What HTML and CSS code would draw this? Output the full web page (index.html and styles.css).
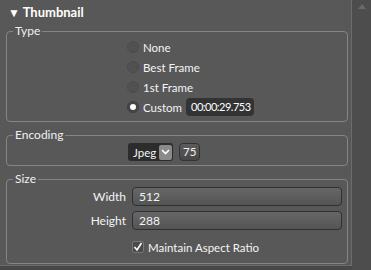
FILE: index.html
```html
<!DOCTYPE html>
<html lang="en">
<head>
  <meta charset="UTF-8" />
  <title>Thumbnail</title>
  <link rel="stylesheet" href="styles.css">
</head>
<body>
  <div class="frame">
    <div class="panel">
      <div class="header"><span class="caret">▼</span> Thumbnail</div>

      <fieldset class="group">
        <legend>Type</legend>
        <div class="radios">
          <label class="radio"><span class="dot"></span>None</label>
          <label class="radio"><span class="dot"></span>Best Frame</label>
          <label class="radio"><span class="dot"></span>1st Frame</label>
          <label class="radio"><span class="dot on"></span>Custom <span class="timecode">00:00:29.753</span></label>
        </div>
      </fieldset>

      <fieldset class="group">
        <legend>Encoding</legend>
        <div class="encoding">
          <div class="select">
            <span class="select-text">Jpeg</span>
            <span class="select-btn">
              <svg width="9" height="6" viewBox="0 0 9 6"><path d="M1 1 L4.5 4.5 L8 1" fill="none" stroke="#fff" stroke-width="1.6"/></svg>
            </span>
          </div>
          <div class="quality">75</div>
        </div>
      </fieldset>

      <fieldset class="group">
        <legend>Size</legend>
        <div class="size-grid">
          <span class="field-label">Width</span>
          <div class="input">512</div>
          <span class="field-label">Height</span>
          <div class="input">288</div>
          <span></span>
          <label class="check">
            <span class="box">
              <svg width="10" height="10" viewBox="0 0 10 10"><path d="M1.5 5 L4 8 L8.5 1" fill="none" stroke="#fff" stroke-width="1.6"/></svg>
            </span>
            Maintain Aspect Ratio
          </label>
        </div>
      </fieldset>
    </div>
    <div class="scroll">
      <span class="arrow"></span>
    </div>
  </div>
</body>
</html>
```

FILE: styles.css
```css
body {
  margin: 0;
  background: #484848;
  font-family: 'Lato', 'Noto Sans', sans-serif;
  font-size: 11.5px;
  color: #f4f4f4;
}
.frame {
  display: flex;
  width: 371px;
  height: 270px;
}
.panel {
  width: 352px;
  height: 266px;
  background: #585858;
  border-right: 1px solid #6c6c6c;
  border-bottom: 1px solid #6c6c6c;
  padding: 0 0 0 6px;
  box-sizing: border-box;
}
.scroll {
  flex: 1;
  background: #4d4d4d;
  display: flex;
  justify-content: center;
  padding-top: 4px;
}
.arrow {
  width: 0;
  height: 0;
  border-left: 4px solid transparent;
  border-right: 4px solid transparent;
  border-bottom: 5px solid #6a6a6a;
}
.header {
  height: 24px;
  line-height: 24px;
  font-weight: bold;
  font-size: 13px;
  color: #fff;
  padding-left: 2px;
}
.caret {
  font-size: 12px;
}
.group {
  width: 342px;
  box-sizing: border-box;
  margin: 0 0 6px 0;
  padding: 0 6px 4px 6px;
  border: 1px solid #858585;
  border-radius: 4px;
}
.group legend {
  padding: 0 2px;
  margin-left: 0;
  line-height: 14px;
  font-size: 12px;
  color: #f0f0f0;
}
.radios {
  display: flex;
  flex-direction: column;
  padding-left: 114px;
  margin-top: -1px;
}
.radio {
  display: flex;
  align-items: center;
  height: 20px;
  gap: 4px;
}
.dot {
  width: 12px;
  height: 12px;
  box-sizing: border-box;
  border-radius: 50%;
  background: #515151;
  border: 1px solid #4b4b4b;
  position: relative;
}
.dot.on {
  background: #464646;
  border-color: #3f3f3f;
}
.dot.on::after {
  content: "";
  position: absolute;
  left: 2px;
  top: 2px;
  width: 6px;
  height: 6px;
  border-radius: 50%;
  background: #fff;
}
.timecode {
  background: #333;
  border-radius: 4px;
  padding: 2px 3px 3px 5px;
  margin-left: 0;
  font-size: 11px;
  letter-spacing: -0.5px;
  color: #fff;
}
.encoding {
  display: flex;
  gap: 6px;
  padding-left: 115px;
  margin-top: 1px;
}
.select {
  display: flex;
  align-items: center;
  height: 18px;
  background: #2c2c2c;
  border-radius: 3px;
  padding: 0 1px 0 5px;
  gap: 3px;
}
.select-btn {
  display: flex;
  align-items: center;
  justify-content: center;
  width: 13px;
  height: 15px;
  background: #8a8a8a;
  border-radius: 2px;
}
.quality {
  height: 18px;
  line-height: 16px;
  background: linear-gradient(#5c5c5c, #474747);
  border: 1px solid #333;
  border-radius: 4px;
  box-sizing: border-box;
  width: 21px;
  text-align: center;
}
.size-grid {
  display: grid;
  grid-template-columns: 113px 1fr;
  column-gap: 6px;
  row-gap: 5px;
  align-items: center;
  margin-top: 1px;
}
.field-label {
  text-align: right;
  font-size: 12px;
}
.input {
  height: 19px;
  line-height: 17px;
  box-sizing: border-box;
  border: 1px solid #303030;
  border-radius: 4px;
  background: linear-gradient(#676767, #545454);
  padding-left: 6px;
  margin-right: -1px;
  font-size: 12px;
}
.check {
  display: flex;
  align-items: center;
  gap: 4px;
  height: 20px;
  margin: 2px 0 2px 0;
}
.box {
  display: flex;
  align-items: center;
  justify-content: center;
  width: 12px;
  height: 12px;
  box-sizing: border-box;
  border: 1px solid #777;
  background: #4a4a4a;
  border-radius: 2px;
}
```
